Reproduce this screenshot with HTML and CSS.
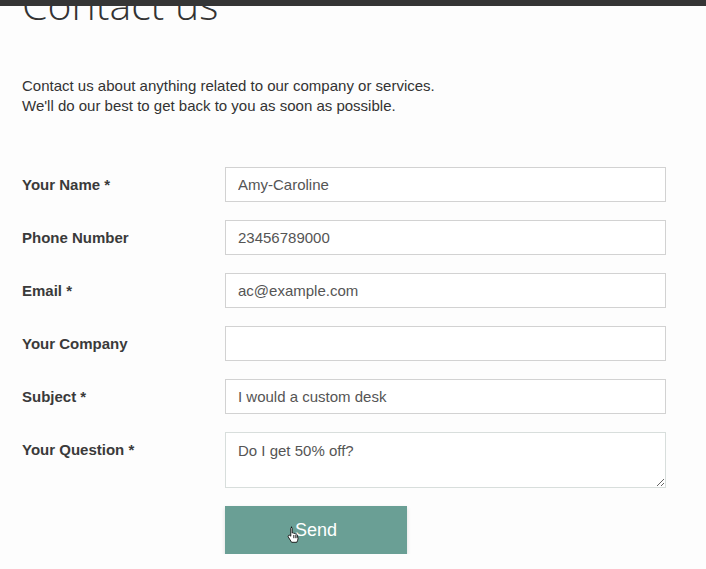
FILE: index.html
```html
<!DOCTYPE html>
<html lang="en">
<head>
<meta charset="utf-8">
<title>Contact us</title>
<link rel="stylesheet" href="styles.css">
</head>
<body>
<div class="topbar"></div>
<main class="page">
  <h1 class="title">Contact us</h1>
  <p class="intro">Contact us about anything related to our company or services.<br>We'll do our best to get back to you as soon as possible.</p>
  <form class="form">
    <div class="row">
      <label class="label" for="name">Your Name *</label>
      <input class="field" id="name" type="text" value="Amy-Caroline">
    </div>
    <div class="row">
      <label class="label" for="phone">Phone Number</label>
      <input class="field" id="phone" type="text" value="23456789000">
    </div>
    <div class="row">
      <label class="label" for="email">Email *</label>
      <input class="field" id="email" type="text" value="ac@example.com">
    </div>
    <div class="row">
      <label class="label" for="company">Your Company</label>
      <input class="field" id="company" type="text" value="">
    </div>
    <div class="row">
      <label class="label" for="subject">Subject *</label>
      <input class="field" id="subject" type="text" value="I would a custom desk">
    </div>
    <div class="row">
      <label class="label" for="question">Your Question *</label>
      <textarea class="field area" id="question">Do I get 50% off?</textarea>
    </div>
    <div class="row">
      <span class="label"></span>
      <div class="btn-wrap">
        <button class="send" type="button">Send</button>
        <svg class="cursor" width="14" height="17" viewBox="0 0 14 17">
          <path d="M4 1.2c.7 0 1.2.5 1.2 1.2V7l.3-.1c.6-.2 1.2.1 1.4.6.5-.3 1.2-.1 1.5.4.5-.3 1.300-.1 1.5.5l.9 2.6c.4 1.2.3 2.3-.2 3.4l-.8 1.9H4.6L1.3 11c-.4-.5-.3-1.2.2-1.6.4-.3 1-.3 1.4 0l.9.8V2.4c0-.7.5-1.2 1.2-1.2z" fill="#fff" stroke="#111" stroke-width="0.9" stroke-linejoin="round"/>
          <path d="M6.7 9v3.2M8.3 9v3.2M9.9 9.3v2.9" stroke="#111" stroke-width="0.8"/>
        </svg>
      </div>
    </div>
  </form>
</main>
</body>
</html>
```

FILE: styles.css
```css
html, body {
  margin: 0;
  padding: 0;
  background: #fdfdfd;
  overflow: hidden;
}

.topbar {
  position: fixed;
  top: 0;
  left: 0;
  right: 0;
  height: 6px;
  background: #353535;
  z-index: 5;
}

.page {
  padding: 0 22px;
  font-family: "Liberation Sans", Arial, sans-serif;
  color: #333;
}

.title {
  margin: -17px 0 0 0;
  font-family: "Open Sans", sans-serif;
  font-weight: 300;
  font-size: 41px;
  line-height: 42px;
  color: #333;
}

.intro {
  margin: 51px 0 0 0;
  font-size: 15px;
  line-height: 20px;
  color: #333;
}

.form {
  margin-top: 51px;
  display: flex;
  flex-direction: column;
  gap: 18px;
}

.row {
  display: flex;
  align-items: flex-start;
}

.label {
  flex: 0 0 203px;
  font-size: 15px;
  font-weight: bold;
  line-height: 35px;
  color: #3a3a3a;
}

.field {
  box-sizing: border-box;
  width: 441px;
  height: 35px;
  margin: 0;
  padding: 0 12px;
  border: 1px solid #d2d2d2;
  border-radius: 0;
  background: #fff;
  font-family: "Liberation Sans", Arial, sans-serif;
  font-size: 15px;
  color: #555;
  outline: none;
}

.area {
  height: 56px;
  padding-top: 9px;
  line-height: 18px;
  border-color: #d8dedc;
  resize: both;
}

.btn-wrap {
  position: relative;
}

.send {
  display: block;
  width: 182px;
  height: 48px;
  margin: 0;
  border: none;
  border-radius: 0;
  background: #6a9f95;
  color: #fff;
  font-family: "Liberation Sans", Arial, sans-serif;
  font-size: 18px;
  box-shadow: 0 2px 4px rgba(0, 0, 0, 0.14);
  cursor: pointer;
}

.cursor {
  position: absolute;
  left: 62px;
  top: 20px;
}
```
